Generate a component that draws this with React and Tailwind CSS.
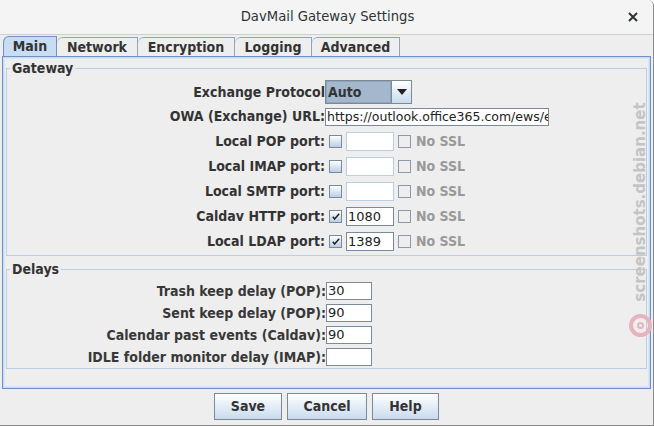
import React from 'react'

const plain = { fontFamily: '"DejaVu Sans", Verdana, sans-serif', fontStretch: 'normal' }
const cond = { fontFamily: '"DejaVu Sans Condensed", "DejaVu Sans", sans-serif', fontStretch: 'condensed' }

const tabs = [
  { name: 'Main', w: 'w-[54px]', active: true },
  { name: 'Network', w: 'w-[81px]' },
  { name: 'Encryption', w: 'w-[97px]' },
  { name: 'Logging', w: 'w-[77px]' },
  { name: 'Advanced', w: 'w-[88px]' },
]

const ports = [
  { label: 'Local POP port:', on: false, value: '' },
  { label: 'Local IMAP port:', on: false, value: '' },
  { label: 'Local SMTP port:', on: false, value: '' },
  { label: 'Caldav HTTP port:', on: true, value: '1080' },
  { label: 'Local LDAP port:', on: true, value: '1389' },
]

const delays = [
  { label: 'Trash keep delay (POP):', value: '30' },
  { label: 'Sent keep delay (POP):', value: '90' },
  { label: 'Calendar past events (Caldav):', value: '90' },
  { label: 'IDLE folder monitor delay (IMAP):', value: '' },
]

const Check = ({ on }) => (
  <div className="ml-[4px] w-[13px] h-[13px] border border-[#7a8a99] bg-gradient-to-b from-[#ffffff] to-[#b8cfe5] flex items-end justify-start pl-[2px] pb-[2px]">
    {on && (
      <svg width="8" height="7" viewBox="0 0 8 7">
        <path d="M0.8 3.8 L2.6 6 L7.2 0.8" stroke="#222" strokeWidth="1.5" fill="none" />
      </svg>
    )}
  </div>
)

const Group = ({ title, children, className }) => (
  <div className={'relative border border-[#b8cfe5] ' + className}>
    <span className="absolute -top-[9px] left-[3px] bg-[#eeeeee] px-[2px] text-[14px] font-bold leading-[16px] text-[#333]">
      {title}
    </span>
    {children}
  </div>
)

const Button = ({ children, w }) => (
  <button style={cond} className={'h-[27px] border border-[#7a8a99] bg-gradient-to-b from-[#ffffff] to-[#c9dbee] text-[14px] font-bold text-[#333] ' + w}>
    {children}
  </button>
)

const Field = ({ value, w, h, border }) => (
  <div style={plain} className={'bg-white border text-[13px] leading-[16px] pl-[1px] text-[#222] ' + w + ' ' + h + ' ' + border}>
    {value}
  </div>
)

const App = () => {
  return (
    <div style={cond} className="relative w-[654px] h-[426px] overflow-hidden bg-[#eeeeee] flex flex-col border-r border-b border-[#8a8a8a] rounded-tr-[6px]">
      {/* title bar */}
      <div style={plain} className="h-[35px] shrink-0 bg-[#f4f4f4] border-b border-[#cfcfcf] grid grid-cols-[1fr_auto_1fr] items-center">
        <div />
        <div className="text-[13.2px] text-[#2e3436] pl-[2px]">DavMail Gateway Settings</div>
        <div className="flex justify-end pr-[15px]">
          <svg width="10" height="10" viewBox="0 0 10 10">
            <path d="M1 1 L9 9 M9 1 L1 9" stroke="#2e3436" strokeWidth="2" />
          </svg>
        </div>
      </div>

      {/* tabs */}
      <div className="flex pl-[3px] pt-[2px] h-[21px] shrink-0 items-end">
        {tabs.map((t) => (
          <div
            key={t.name}
            className={
              'h-[19px] border border-b-0 rounded-tl-[6px] flex items-center justify-center text-[14px] font-bold text-[#333] ' +
              t.w +
              (t.active ? ' bg-[#c8ddf2] border-[#6f8fc6] h-[20px]' : ' bg-[#eeeeee] border-[#8da6c8] border-l-0 first:border-l')
            }
          >
            {t.name}
          </div>
        ))}
      </div>

      {/* content panel */}
      <div className="mx-[2px] h-[333px] shrink-0 border border-[#6f8fc6] shadow-[inset_0_0_0_1px_#c8ddf2,inset_0_0_0_2px_#dbe6f3] px-[3px] pt-[10px] flex flex-col">
        <Group title="Gateway" className="h-[188px] mt-[1px] pt-[11px]">
          <div className="flex items-center h-[24px]">
            <div className="w-[318px] text-right text-[14px] font-bold text-[#333]">Exchange Protocol</div>
            <div className="flex h-[24px] w-[87px] border border-[#7a8a99]">
              <div className="flex-1 bg-[#a3b8cc] border border-[#8ea4bb] flex items-center pl-[1px] text-[14px] font-bold text-[#333]">Auto</div>
              <div className="w-[20px] border-l border-[#7a8a99] bg-gradient-to-b from-[#ffffff] to-[#c9dbee] flex items-center justify-center">
                <svg width="10" height="6" viewBox="0 0 10 6">
                  <path d="M0 0 H10 L5 6 Z" fill="#222" />
                </svg>
              </div>
            </div>
          </div>
          <div className="flex items-center h-[25px]">
            <div className="w-[318px] text-right text-[14px] font-bold text-[#333]">OWA (Exchange) URL:</div>
            <div style={plain} className="w-[224px] h-[18px] bg-white border border-[#7a8a99] overflow-hidden whitespace-nowrap text-[12.5px] leading-[16px] text-[#222] pl-[1px]">
              https://outlook.office365.com/ews/exchange.asmx
            </div>
          </div>
          {ports.map((p) => (
            <div key={p.label} className="flex items-center h-[25px]">
              <div className="w-[318px] text-right text-[14px] font-bold text-[#333]">{p.label}</div>
              <Check on={p.on} />
              <div
                style={plain}
                className={
                  'ml-[4px] w-[48px] h-[19px] bg-white border text-[13px] leading-[17px] pl-[1px] text-[#222] ' +
                  (p.on ? 'border-[#7a8a99]' : 'border-[#b8cfe5]')
                }
              >
                {p.value}
              </div>
              <div className="ml-[4px] w-[13px] h-[13px] border border-[#8a9aa8]" />
              <span className="ml-[5px] text-[14px] font-bold text-[#999]">No SSL</span>
            </div>
          ))}
        </Group>

        <Group title="Delays" className="h-[100px] mt-[13px] pt-[10px]">
          {delays.map((d) => (
            <div key={d.label} className="flex items-center h-[22px]">
              <div className="w-[319px] text-right text-[14px] font-bold text-[#383838]">{d.label}</div>
              <Field value={d.value} w="w-[46px]" h="h-[18px]" border="border-[#7a8a99]" />
            </div>
          ))}
        </Group>
      </div>

      {/* buttons */}
      <div className="flex justify-center gap-[5px] pt-[4px]">
        <Button w="w-[68px]">Save</Button>
        <Button w="w-[80px]">Cancel</Button>
        <Button w="w-[67px]">Help</Button>
      </div>

      {/* watermark */}
      <div style={plain} className="absolute left-[540px] top-[192px] w-[200px] h-[20px] -rotate-90 text-center text-[15px] font-bold leading-[20px] text-[#c4c4c4] whitespace-nowrap">
        screenshots.debian.net
      </div>
      <div className="absolute left-[629px] top-[314px] w-[23px] h-[23px] rounded-full border-[4px] border-[#e8b2bf] flex items-center justify-center">
        <div className="w-[7px] h-[7px] rounded-full border-[2px] border-[#e8b2bf]" />
      </div>
    </div>
  )
}

export default App
